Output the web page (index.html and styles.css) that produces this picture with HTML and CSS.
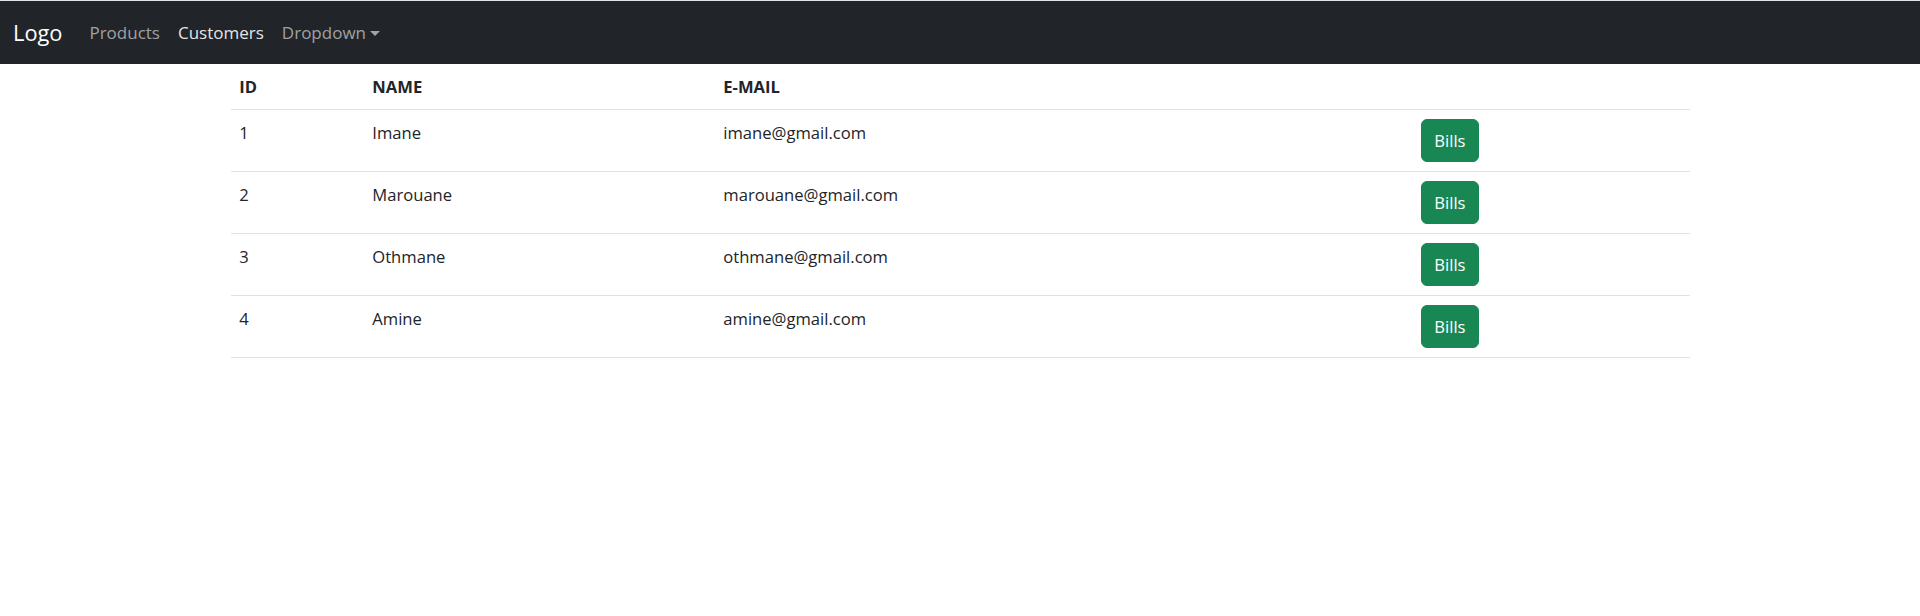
FILE: index.html
```html
<!DOCTYPE html>
<html lang="en">
<head>
<meta charset="utf-8">
<title>Customers</title>
<link rel="stylesheet" href="styles.css">
</head>
<body>
<nav class="navbar">
  <a class="brand" href="#">Logo</a>
  <ul class="nav">
    <li><a class="nav-link" href="#">Products</a></li>
    <li><a class="nav-link active" href="#">Customers</a></li>
    <li><a class="nav-link dropdown" href="#">Dropdown<span class="caret"></span></a></li>
  </ul>
</nav>
<main class="content">
  <table class="table">
    <colgroup>
      <col class="c-id"><col class="c-name"><col class="c-mail"><col class="c-act">
    </colgroup>
    <thead>
      <tr><th>ID</th><th>NAME</th><th>E-MAIL</th><th></th></tr>
    </thead>
    <tbody>
      <tr><td>1</td><td>Imane</td><td>imane@gmail.com</td><td><a class="btn" href="#">Bills</a></td></tr>
      <tr><td>2</td><td>Marouane</td><td>marouane@gmail.com</td><td><a class="btn" href="#">Bills</a></td></tr>
      <tr><td>3</td><td>Othmane</td><td>othmane@gmail.com</td><td><a class="btn" href="#">Bills</a></td></tr>
      <tr><td>4</td><td>Amine</td><td>amine@gmail.com</td><td><a class="btn" href="#">Bills</a></td></tr>
    </tbody>
  </table>
</main>
</body>
</html>
```
FILE: styles.css
```css
* { box-sizing: border-box; }
html, body {
  margin: 0;
  padding: 0;
  background: #fff;
}
body {
  font-family: "Open Sans", "Noto Sans", sans-serif;
  font-size: 16.6px;
  line-height: 27px;
  color: #212529;
  border-top: 1px solid #e3e3e3;
}
a { text-decoration: none; }

.navbar {
  display: flex;
  align-items: center;
  height: 63px;
  padding: 0 13px;
  background: #212529;
}
.brand {
  font-size: 21.8px;
  color: #fff;
  margin-right: 18px;
  line-height: 33px;
}
.nav {
  display: flex;
  list-style: none;
  margin: 0;
  padding: 0;
}
.nav-link {
  display: flex;
  align-items: center;
  padding: 0 9px;
  font-size: 17px;
  color: rgba(255,255,255,.58);
}
.nav-link.active { color: rgba(255,255,255,.9); }
.caret {
  display: inline-block;
  margin-left: 4px;
  margin-top: 2px;
  border-top: 5.5px solid;
  border-left: 5.5px solid transparent;
  border-right: 5.5px solid transparent;
}

.content {
  display: flex;
  justify-content: center;
}
.table {
  width: 1459px;
  border-collapse: collapse;
}
.c-id { width: 133px; }
.c-name { width: 351px; }
.c-mail { width: 698px; }
.c-act { width: 277px; }
.table th,
.table td {
  text-align: left;
  vertical-align: top;
  padding: 9px 8.8px;
  border-bottom: 1px solid #dee2e6;
}
.table th {
  font-weight: 700;
}
.btn {
  display: inline-block;
  padding: 7px 12px;
  line-height: 27px;
  border: 1px solid #198754;
  border-radius: 6px;
  background: #198754;
  color: #fff;
}
```
